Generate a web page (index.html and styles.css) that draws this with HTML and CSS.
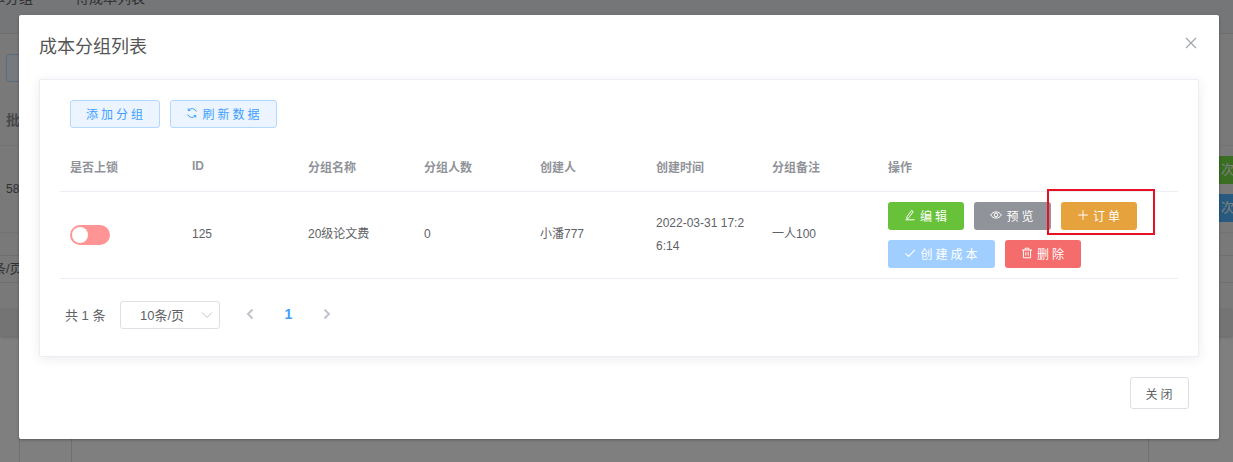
FILE: index.html
```html
<!DOCTYPE html>
<html lang="zh-CN">
<head>
<meta charset="utf-8">
<title>成本分组列表</title>
<link rel="stylesheet" href="styles.css">
</head>
<body>
<div class="page">
  <div class="tabs"><span class="tab tab-first">本分组</span><span class="tab">待成本列表</span></div>
  <div class="toolbar"><span class="bg-btn"></span></div>
  <div class="bg-head">批次</div>
  <div class="bg-row">
    <span class="bg-cell">58</span>
    <div class="bg-tags"><span class="bg-tag bg-green">次数</span><span class="bg-tag bg-blue">次数</span></div>
  </div>
  <div class="bg-pager"><div class="bg-select"><span class="bg-select-text">条/页</span></div></div>
  <div class="bg-band"></div>
  <div class="bg-bottom"><span class="bg-col bg-col-a"></span><span class="bg-col bg-col-b"></span><span class="bg-col bg-col-c"></span></div>
</div>

<div class="overlay">
  <div class="modal">
    <div class="modal-head">
      <span class="modal-title">成本分组列表</span>
      <svg class="close-x" viewBox="0 0 12 12" width="12" height="12"><path d="M1 1l10 10M11 1L1 11" stroke="#a0a3a8" stroke-width="1.1" fill="none"/></svg>
    </div>
    <div class="card">
      <div class="actions-top">
        <button class="btn-plain btn-add">添加分组</button>
        <button class="btn-plain btn-refresh"><svg class="ico" viewBox="0 0 12 12" width="12" height="12"><path d="M10.3 4.6A4.5 4.5 0 0 0 2.4 3.4M1.7 7.4a4.5 4.5 0 0 0 7.9 1.2M2.2 1.4v2.2h2.2M9.8 10.6V8.4H7.6" stroke="currentColor" stroke-width="1" fill="none"/></svg>刷新数据</button>
      </div>
      <div class="table">
        <div class="tr thead">
          <div class="td">是否上锁</div><div class="td">ID</div><div class="td">分组名称</div><div class="td">分组人数</div><div class="td">创建人</div><div class="td">创建时间</div><div class="td">分组备注</div><div class="td">操作</div>
        </div>
        <div class="tr tbody">
          <div class="td"><span class="switch"><span class="knob"></span></span></div>
          <div class="td td-text">125</div>
          <div class="td td-text">20级论文费</div>
          <div class="td td-text">0</div>
          <div class="td td-text">小潘777</div>
          <div class="td td-time">2022-03-31 17:26:14</div>
          <div class="td td-text">一人100</div>
          <div class="td td-ops">
            <button class="btn btn-green"><svg class="ico" viewBox="0 0 12 12" width="12" height="12"><path d="M3 7.6L7.6 1.4l1.6 1.2L4.6 8.9 2.8 9.6zM1.5 10.8h9" stroke="currentColor" stroke-width="1" fill="none"/></svg>编辑</button>
            <button class="btn btn-gray"><svg class="ico" viewBox="0 0 12 12" width="12" height="12"><path d="M.6 6C2 3.9 3.9 2.9 6 2.9S10 3.9 11.4 6C10 8.1 8.1 9.1 6 9.1S2 8.1.6 6z" stroke="currentColor" stroke-width="1" fill="none"/><circle cx="6" cy="6" r="1.8" stroke="currentColor" stroke-width="1" fill="none"/></svg>预览</button>
            <button class="btn btn-orange"><svg class="ico" viewBox="0 0 12 12" width="12" height="12"><path d="M6 1.2v9.6M1.2 6h9.6" stroke="currentColor" stroke-width="1" fill="none"/></svg>订单</button>
            <button class="btn btn-light"><svg class="ico" viewBox="0 0 12 12" width="12" height="12"><path d="M1.4 6.4L4.6 9.4 10.8 2.8" stroke="currentColor" stroke-width="1.1" fill="none"/></svg>创建成本</button>
            <button class="btn btn-red"><svg class="ico" viewBox="0 0 12 12" width="12" height="12"><path d="M1 3h10M4.2 3V1.2h3.6V3M2.4 3v7.8h7.2V3M4.8 5v3.6M7.2 5v3.6" stroke="currentColor" stroke-width="1" fill="none"/></svg>删除</button>
          </div>
        </div>
      </div>
      <div class="pager">
        <span class="total">共 1 条</span>
        <div class="size-select"><span>10条/页</span><svg class="caret" viewBox="0 0 12 8" width="12" height="8"><path d="M1 1.5l5 5 5-5" stroke="#c0c4cc" stroke-width="1" fill="none"/></svg></div>
        <svg class="chev chev-prev" viewBox="0 0 8 12" width="8" height="12"><path d="M6.5 1.5L2 6l4.5 4.5" stroke="#c0c4cc" stroke-width="2" fill="none"/></svg>
        <span class="page-num">1</span>
        <svg class="chev" viewBox="0 0 8 12" width="8" height="12"><path d="M1.5 1.5L6 6l-4.5 4.5" stroke="#c0c4cc" stroke-width="2" fill="none"/></svg>
      </div>
    </div>
    <div class="modal-foot"><button class="btn-close">关闭</button></div>
    <span class="mark"></span>
  </div>
</div>
</body>
</html>
```
FILE: styles.css
```css
* { box-sizing: border-box; }
html, body { margin: 0; padding: 0; }
body {
  width: 1233px;
  height: 462px;
  overflow: hidden;
  position: relative;
  font-family: "Liberation Sans", "Noto Sans CJK SC", sans-serif;
  color: #606266;
  background: #fff;
}
button { font-family: inherit; cursor: pointer; }

/* page behind the dialog */
.page { height: 462px; display: flex; flex-direction: column; overflow: hidden; }
.tabs {
  height: 34px;
  flex: none;
  display: flex;
  background: #ebedf0;
  border-bottom: 1px solid #dcdfe6;
  font-size: 14px;
  line-height: 2px;
  overflow: hidden;
}
.tab { width: 140px; margin-top: -3px; }
.tab-first { width: 84px; margin-left: -9px; }
.toolbar { height: 49px; flex: none; padding: 20px 0 0 6px; background: #f2f2f2; }
.bg-btn { display: block; width: 40px; height: 28px; background: #ecf5ff; border: 1px solid #b3d8ff; border-radius: 3px; }
.bg-head {
  height: 63px;
  flex: none;
  padding: 27px 0 0 6px;
  font-size: 14px;
  font-weight: 700;
  line-height: 20px;
  color: #909399;
  background: #f2f2f2;
  border-bottom: 1px solid #e6e6e6;
}
.bg-row { height: 87px; flex: none; display: flex; justify-content: space-between; background: #f2f2f2; border-bottom: 1px solid #e6e6e6; font-size: 12px; }
.bg-cell { padding: 33px 0 0 6px; line-height: 20px; }
.bg-tags { width: 14px; padding-top: 10px; display: flex; flex-direction: column; gap: 10px; overflow: hidden; }
.bg-tag { width: 40px; height: 28px; padding-left: 2px; line-height: 28px; color: #fff; font-size: 13px; white-space: nowrap; }
.bg-green { background: #74dc46; }
.bg-blue { background: #50b4ff; }
.bg-pager { height: 77px; flex: none; padding-top: 22px; background: #f2f2f2; }
.bg-select { height: 28px; border-top: 1px solid #dcdfe6; border-bottom: 1px solid #dcdfe6; font-size: 13px; line-height: 26px; }
.bg-select-text { display: block; margin-left: -7px; }
.bg-band { height: 26px; flex: none; background: #e8e8e8; box-shadow: 0 1px 4px rgba(0,0,0,.2); }
.bg-bottom { flex: 1; display: flex; }
.bg-col { display: block; width: 1px; background: #dcdfe6; }
.bg-col-a { margin-left: 19px; }
.bg-col-b { margin-left: 51px; }
.bg-col-c { margin-left: 1076px; }

/* overlay and dialog */
.overlay { position: absolute; inset: 0; background: rgba(0,0,0,.5); padding: 15px 0 0 19px; }
.modal {
  position: relative;
  width: 1200px;
  height: 424px;
  background: #fff;
  border-radius: 2px;
  box-shadow: 0 1px 3px rgba(0,0,0,.3);
}
.modal-head { height: 64px; padding: 20px; display: flex; justify-content: space-between; align-items: flex-start; }
.modal-title { font-size: 18px; line-height: 24px; color: #555; }
.close-x { margin: 2px 2px 0 0; }

.card {
  width: 1160px;
  height: 278px;
  margin-left: 20px;
  padding: 20px 20px 0;
  background: #fff;
  border: 1px solid #ebeef5;
  border-radius: 2px;
  box-shadow: 0 2px 12px rgba(0,0,0,.08);
}
.actions-top { display: flex; gap: 10px; padding-left: 10px; }
.btn-plain {
  height: 28px;
  padding: 0 0 2px 2px;
  font-size: 12px;
  letter-spacing: 3px;
  color: #409eff;
  background: #ecf5ff;
  border: 1px solid #b3d8ff;
  border-radius: 3px;
  display: flex;
  align-items: center;
  justify-content: center;
}
.btn-add { width: 90px; }
.btn-refresh { width: 107px; }
.ico { flex: none; margin-right: 4px; }

.table { margin-top: 18px; }
.tr { display: grid; grid-template-columns: 122px repeat(6, 116px) 1fr; font-size: 12px; border-bottom: 1px solid #ebeef5; }
.td { padding: 0 10px; display: flex; align-items: center; min-width: 0; }
.thead { height: 46px; padding-bottom: 5px; font-weight: 700; color: #909399; }
.tbody { height: 87px; line-height: 23px; }
.td-text { padding-bottom: 2px; }
.td-time { display: block; align-self: center; word-break: break-all; }
.td-ops { padding: 10px; display: flex; flex-wrap: wrap; gap: 10px; align-content: flex-start; }

.switch { display: block; width: 40px; height: 20px; padding: 2px; border-radius: 10px; background: #ff9494; }
.knob { display: block; width: 16px; height: 16px; border-radius: 50%; background: #fff; }

.btn {
  height: 28px;
  padding: 0 0 2px 2px;
  font-size: 12px;
  letter-spacing: 3px;
  color: #fff;
  border: 0;
  border-radius: 3px;
  display: flex;
  align-items: center;
  justify-content: center;
}
.btn-green { width: 76px; background: #67c23a; }
.btn-gray { width: 77px; background: #909399; }
.btn-orange { width: 76px; background: #e6a23c; }
.btn-light { width: 107px; background: #a0cfff; }
.btn-red { width: 76px; background: #f56c6c; }

.pager { display: flex; align-items: center; height: 28px; margin-top: 22px; padding-left: 5px; font-size: 13px; }
.total { width: 55px; flex: none; white-space: nowrap; padding-bottom: 2px; }
.size-select {
  width: 100px;
  height: 28px;
  flex: none;
  padding-left: 19px;
  border: 1px solid #dcdfe6;
  border-radius: 3px;
  display: flex;
  align-items: center;
  justify-content: space-between;
}
.size-select span { padding-bottom: 2px; }
.caret { margin-right: 6px; }
.chev { flex: none; margin-top: -2px; }
.chev-prev { margin-left: 26px; }
.page-num { width: 69px; flex: none; padding-bottom: 2px; text-align: center; font-weight: 700; font-size: 14px; color: #409eff; }

.modal-foot { display: flex; justify-content: flex-end; padding: 20px 30px 0 0; }
.btn-close { width: 59px; height: 32px; padding: 0 0 0 2px; background: #fff; border: 1px solid #dcdfe6; border-radius: 3px; font-size: 12px; letter-spacing: 3px; color: #606266; }

.mark { position: absolute; left: 1028px; top: 174px; width: 108px; height: 46px; border: 2px solid #e81123; }
```
